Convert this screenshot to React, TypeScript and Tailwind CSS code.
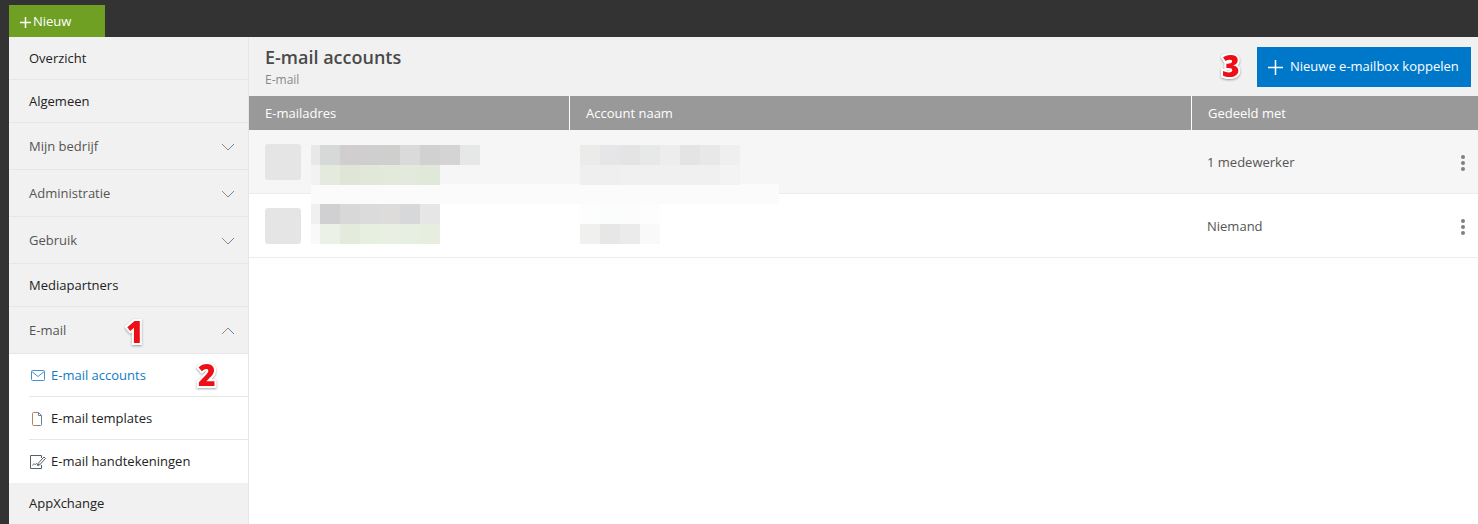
import React from "react";

const font = { fontFamily: '"Open Sans", "Noto Sans", sans-serif' };

function Chevron({ up = false }: { up?: boolean }) {
  return (
    <svg width="14" height="8" viewBox="0 0 14 8" fill="none" strokeWidth="1" className="shrink-0">
      <path stroke="#a08c72" d={up ? "M1 7 L7 1" : "M1 1 L7 7"} />
      <path stroke="#5f86ad" d={up ? "M7 1 L13 7" : "M7 7 L13 1"} />
    </svg>
  );
}

function Row({ label, tall, open, dim, chevron }: { label: string; tall?: boolean; open?: boolean; dim?: boolean; chevron?: boolean }) {
  return (
    <div className={`flex items-center justify-between pl-5 pr-[13px] pt-[2px] border-b border-[#e6e6e6] ${tall ? "h-[47px]" : "h-[43px]"}`}>
      <span className={`text-[13px] ${dim ? "text-[#555555]" : "text-[#222222]"}`}>{label}</span>
      {chevron && <Chevron up={open} />}
    </div>
  );
}

function MailIcon() {
  return (
    <svg width="14" height="11" viewBox="0 0 14 11" fill="none" stroke="#4a90d0" strokeWidth="1" className="-mt-[2px]">
      <rect x=".5" y=".5" width="13" height="10" rx="1" />
      <path d="M.8 1.5 L7 6.5 L13.2 1.5" />
    </svg>
  );
}

function FileIcon() {
  return (
    <svg width="12" height="14" viewBox="0 0 12 14" fill="none" strokeWidth="1">
      <path stroke="#b8835c" d="M7.5.5 H2.5 Q1.5.5 1.5 1.5 V12.5 Q1.5 13.5 2.5 13.5 H6" />
      <path stroke="#6f7f95" d="M6 13.5 H9.5 Q10.5 13.5 10.5 12.5 V3.5 L7.5.5 V3.5 H10.5" />
    </svg>
  );
}

function SignIcon() {
  return (
    <svg width="16" height="14" viewBox="0 0 16 14" fill="none" stroke="#55606c" strokeWidth="1" className="-ml-[1px]">
      <path d="M11.5 3 V.5 H.5 V13.5 H11.5 V10" />
      <path d="M2.5 10.5 C4 7 5 11 6.5 8.5 C7.5 10.5 8.5 9.5 9.5 9" />
      <path d="M8 8.5 L14 2 L15.5 3.5 L9.5 10 L7.5 10.5 Z" />
    </svg>
  );
}

function SubRow({ label, icon, active, last }: { label: string; icon: React.ReactNode; active?: boolean; last?: boolean }) {
  return (
    <div className={`flex items-center h-[43px] ml-5 ${last ? "" : "pt-[2px] border-b border-[#e6e6e6]"}`}>
      <span className="w-[22px] flex items-center pl-[2px]">{icon}</span>
      <span className={`text-[13px] ${active ? "text-[#0f7cc6]" : "text-[#222222]"}`}>{label}</span>
    </div>
  );
}

function Marker({ n, className }: { n: string; className: string }) {
  return (
    <span
      className={`absolute font-extrabold text-[30px] leading-none text-[#ee0f16] [-webkit-text-stroke:4px_white] [paint-order:stroke_fill] [filter:drop-shadow(0_1px_1px_rgba(0,0,0,0.35))] ${className}`}
    >
      {n}
    </span>
  );
}

function Mosaic({ rows, className }: { rows: { lead: string; cells: string[] }[]; className: string }) {
  return (
    <div className={`flex flex-col ${className}`}>
      {rows.map((r, i) => (
        <div key={i} className="flex h-5">
          <div className="w-[9px]" style={{ background: r.lead }} />
          {r.cells.map((c, j) => (
            <div key={j} className="w-5" style={{ background: c }} />
          ))}
        </div>
      ))}
    </div>
  );
}

function Mosaic2({ rows, className }: { rows: string[][]; className: string }) {
  return (
    <div className={`flex flex-col ${className}`}>
      {rows.map((r, i) => (
        <div key={i} className="flex h-5">
          {r.map((c, j) => (
            <div key={j} className="w-5" style={{ background: c }} />
          ))}
        </div>
      ))}
    </div>
  );
}

function DataRow({ shaded, who }: { shaded?: boolean; who: React.ReactNode }) {
  return (
    <div className={`flex items-center h-[64px] border-b border-[#ececec] ${shaded ? "bg-[#f6f6f6]" : "bg-white"}`}>
      <div className="w-[321px] pl-4 flex items-center">
        <div className="w-9 h-9 rounded-[3px] bg-[#e5e5e5]" />
      </div>
      <div className="w-[622px]" />
      <div className="flex-1 flex items-center justify-between pt-[2px] pl-[15px] pr-[13px] text-[13px] text-[#555555]">
        <span>{who}</span>
        <span className="flex flex-col gap-[2px]">
          <span className="w-1 h-1 rounded-full bg-[#808080]" />
          <span className="w-1 h-1 rounded-full bg-[#808080]" />
          <span className="w-1 h-1 rounded-full bg-[#808080]" />
        </span>
      </div>
    </div>
  );
}

export default function App() {
  return (
    <div className="relative h-[524px] w-[1478px] overflow-hidden bg-[#333333] flex flex-col" style={font}>
      <div className="h-[37px] shrink-0 pl-[9px] pt-[5px]">
        <div className="w-24 h-8 pt-[2px] bg-[#6fa023] flex items-center pl-[11px] text-white text-[13px]">
          <svg width="11" height="11" viewBox="0 0 11 11" stroke="white" strokeWidth="1.5" className="mr-[2px]">
            <path d="M5.5 0 V11 M0 5.5 H11" />
          </svg>
          <span>Nieuw</span>
        </div>
      </div>
      <div className="flex flex-1 min-h-0 pl-[9px]">
        <aside className="relative w-[240px] shrink-0 bg-[#f1f1f1] border-r border-[#e6e6e6]">
          <Row label="Overzicht" />
          <Row label="Algemeen" />
          <Row label="Mijn bedrijf" tall dim chevron />
          <Row label="Administratie" tall dim chevron />
          <Row label="Gebruik" tall dim chevron />
          <Row label="Mediapartners" />
          <Row label="E-mail" tall open dim chevron />
          <div className="bg-white">
            <SubRow label="E-mail accounts" icon={<MailIcon />} active />
            <SubRow label="E-mail templates" icon={<FileIcon />} />
            <SubRow label="E-mail handtekeningen" icon={<SignIcon />} last />
          </div>
          <div className="flex items-center h-[41px] pl-5 text-[13px] text-[#222222]">AppXchange</div>
          <Marker n="1" className="left-[117px] top-[280px]" />
          <Marker n="2" className="left-[189px] top-[323px]" />
        </aside>
        <main className="relative flex-1 min-w-0 bg-white">
          <header className="h-[59px] bg-[#f1f1f1] flex justify-between pl-4 pr-[7px]">
            <div className="pt-2">
              <div className="text-[18px] leading-[24px] font-semibold text-[#4a4a4a]">E-mail accounts</div>
              <div className="text-[12px] leading-[16px] mt-[3px] text-[#888888]">E-mail</div>
            </div>
            <div className="flex pt-[10px] items-start">
              <button className="w-[214px] h-10 bg-[#0078c9] text-white text-[13px] flex items-center pl-[11px]">
                <svg width="15" height="15" viewBox="0 0 15 15" stroke="white" strokeWidth="1.5" className="mr-[7px]">
                  <path d="M7.5 0 V15 M0 7.5 H15" />
                </svg>
                Nieuwe e-mailbox koppelen
              </button>
            </div>
          </header>
          <div className="flex h-[34px] bg-[#999999] text-white text-[13px] items-center">
            <div className="w-[321px] h-full pl-4 pt-[2px] flex items-center border-r border-white">E-mailadres</div>
            <div className="w-[622px] h-full pl-4 pt-[2px] flex items-center border-r border-white">Account naam</div>
            <div className="flex-1 h-full pl-4 pt-[2px] flex items-center">Gedeeld met</div>
          </div>
          <DataRow shaded who="1 medewerker" />
          <DataRow who="Niemand" />

          <div className="absolute left-[62px] top-[147px] w-[468px] h-5 bg-[#fbfbfb]" />
          <Mosaic
            className="absolute left-[62px] top-[108px]"
            rows={[
              { lead: "#e8e8e8", cells: ["#d6d9d8", "#d0cece", "#cfcfcf", "#cfcfce", "#dadada", "#d1d1d1", "#d4d4d4", "#e6e8e7"] },
              { lead: "#f2f2f2", cells: ["#e4eade", "#dfe6d7", "#e1e8da", "#e3e9db", "#e4e9de", "#e0e8da"] },
            ]}
          />
          <Mosaic
            className="absolute left-[62px] top-[167px]"
            rows={[
              { lead: "#f1f0f0", cells: ["#d0d0d2", "#d8d8d8", "#dbdbdb", "#dddcdb", "#d7d8da", "#e6e6e6"] },
              { lead: "#f9f9f9", cells: ["#ebf1e7", "#e4ebdc", "#e7efe1", "#e9efe2", "#e7eee2", "#e7eddf"] },
            ]}
          />
          <Mosaic2
            className="absolute left-[331px] top-[108px]"
            rows={[
              ["#ebebe9", "#e6e6e9", "#e4e4e4", "#e7e9e8", "#ededed", "#e4e4e4", "#e8e8e8", "#efefef"],
              ["#efefef", "#efefef", "#f0f0f0", "#f0f0f0", "#f0f0f0", "#f0f0f0", "#f0f0f0", "#f3f3f3"],
            ]}
          />
          <Mosaic2
            className="absolute left-[331px] top-[167px]"
            rows={[
              ["#fdfdfd", "#fbfdfc", "#fcfcfc", "#fdfdfd"],
              ["#f0f0ef", "#e7e7e7", "#ebebeb", "#f9f9f9"],
            ]}
          />
          <Marker n="3" className="left-[973px] top-[14px]" />
        </main>
      </div>
    </div>
  );
}
